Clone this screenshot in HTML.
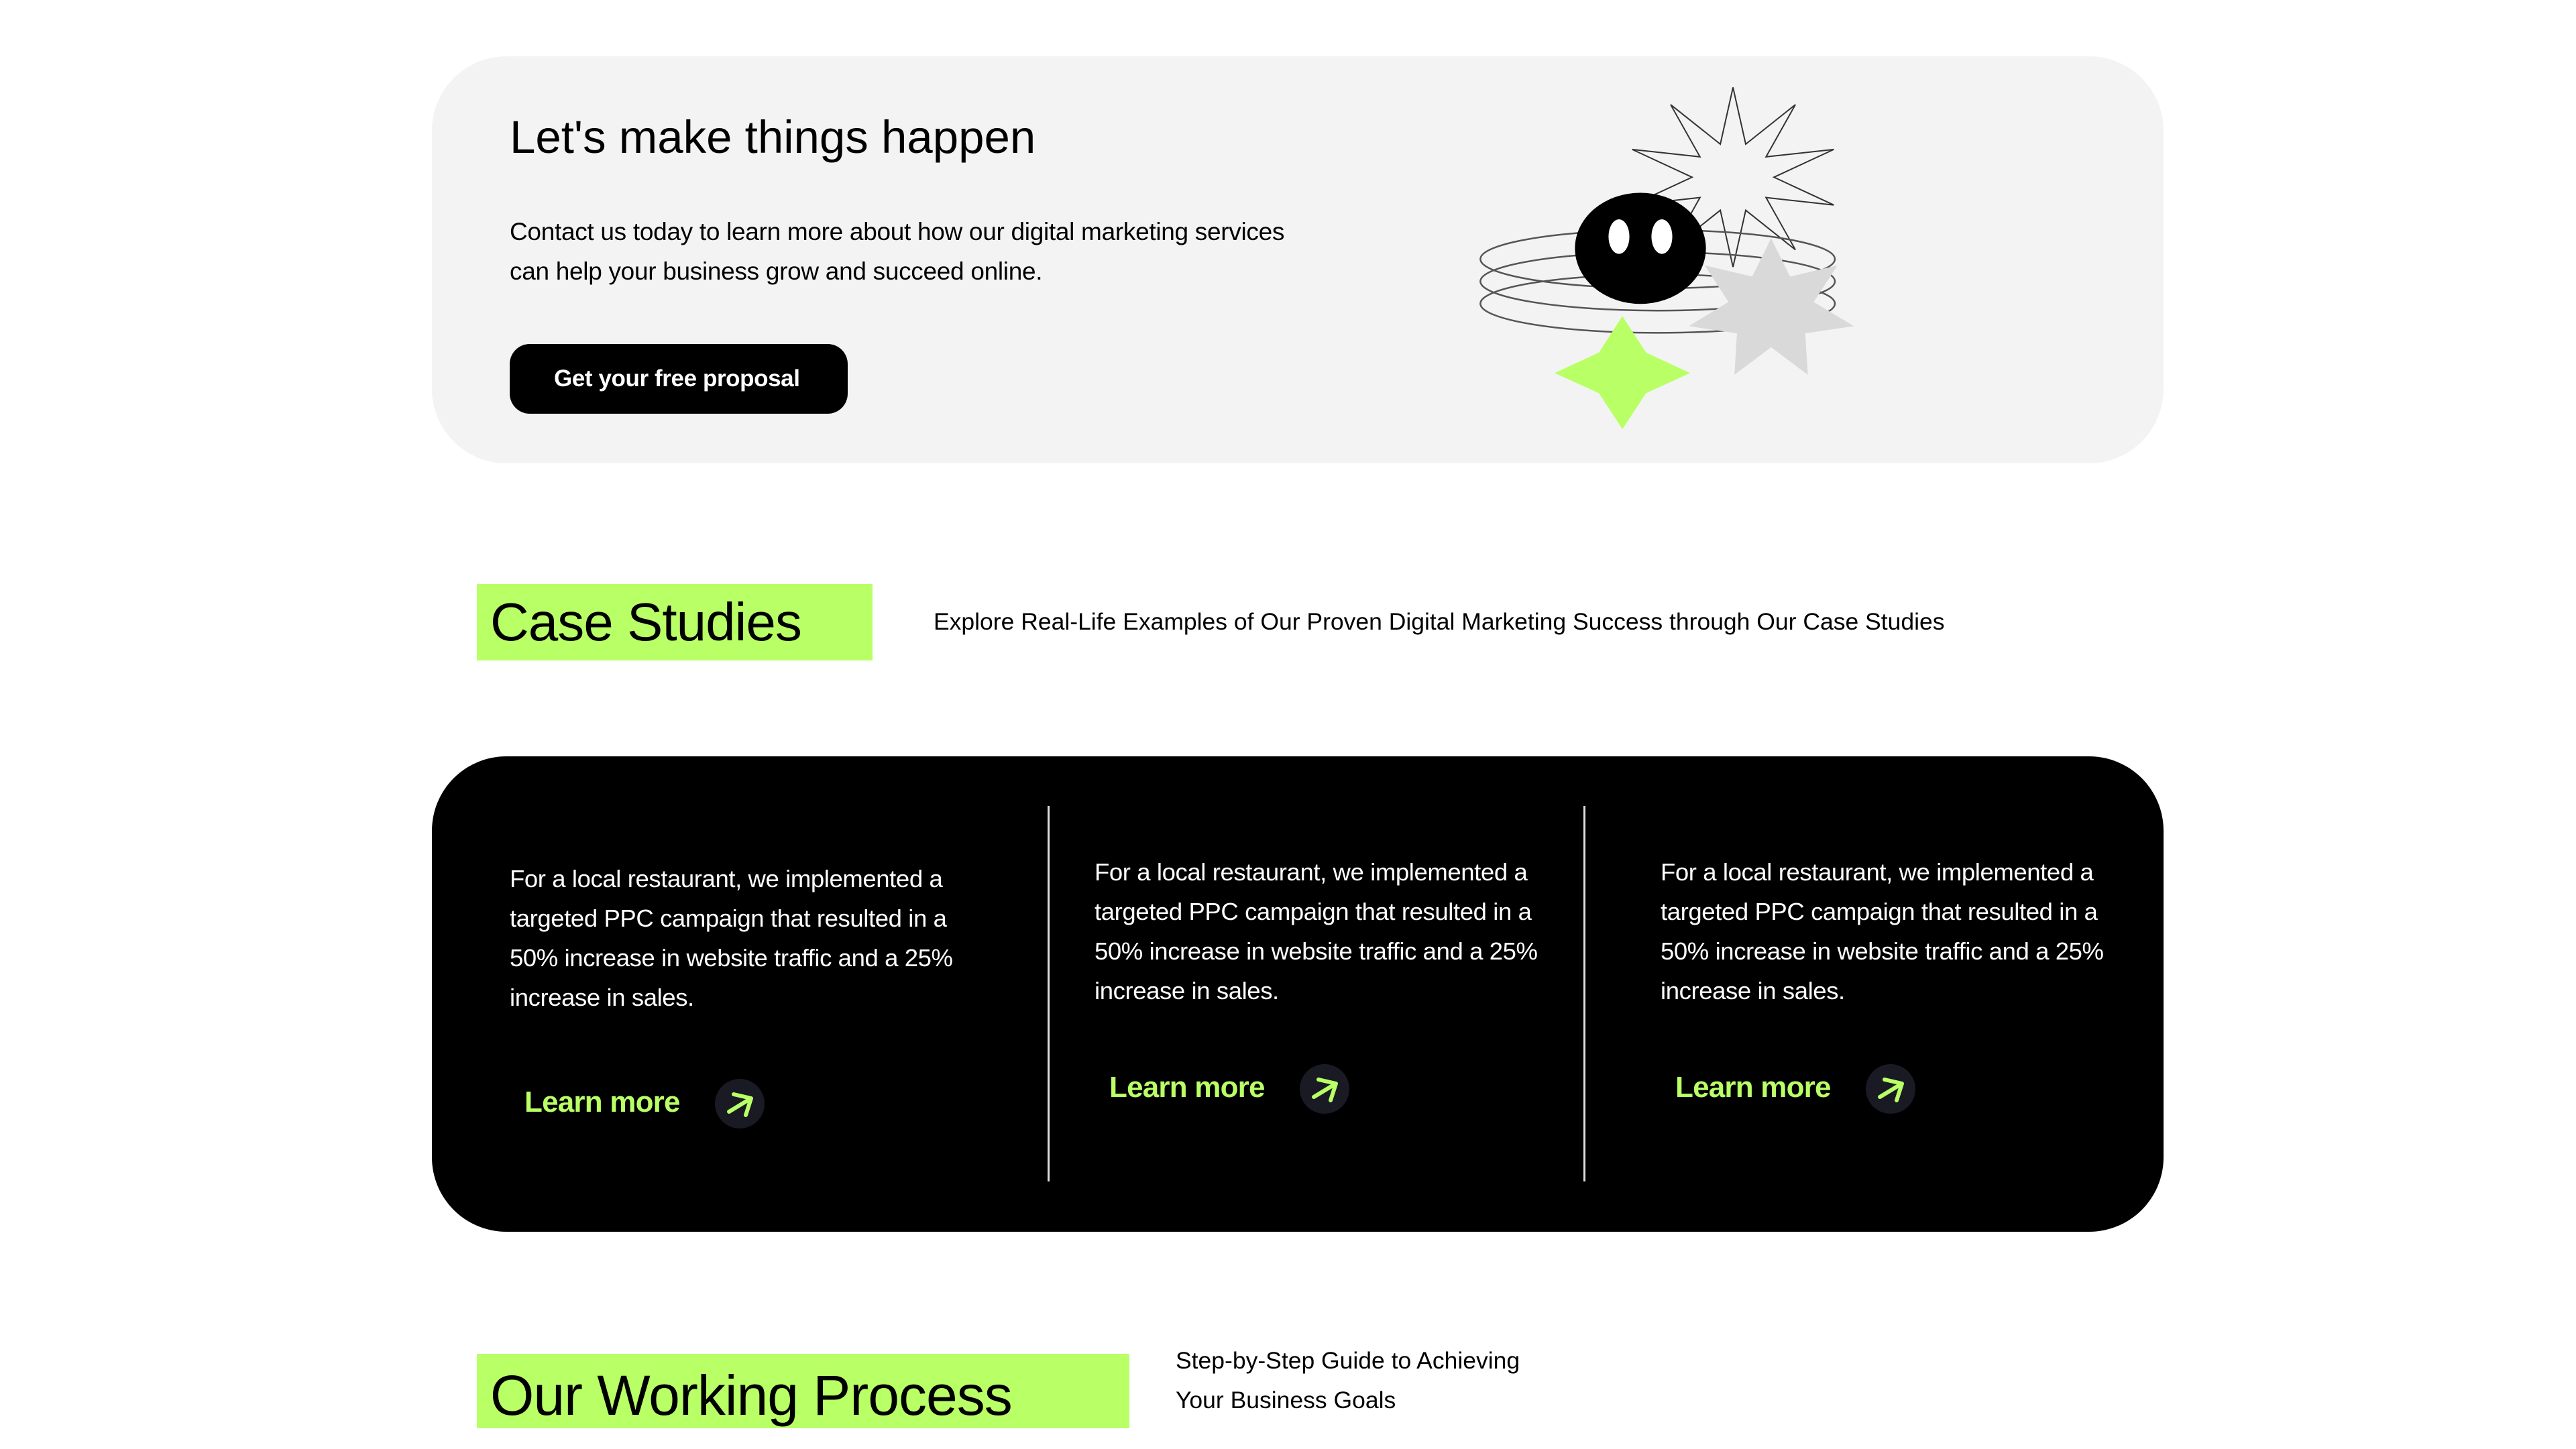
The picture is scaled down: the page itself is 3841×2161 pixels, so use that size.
<!DOCTYPE html>
<html><head><meta charset="utf-8"><style>
*{margin:0;padding:0;box-sizing:border-box}
body{width:3841px;height:2161px;background:#fff;position:relative;overflow:hidden;font-family:"Liberation Sans",sans-serif;color:#000}
.a{position:absolute;white-space:nowrap}
.top{left:644px;top:84px;width:2582px;height:607px;background:#f3f3f3;border-radius:111px}
.h1{left:760px;top:165px;font-size:69px;line-height:80px}
.p{left:760px;top:316px;font-size:37px;line-height:59px;letter-spacing:-0.3px}
.btn{left:760px;top:513px;width:504px;height:104px;background:#000;border-radius:30px;color:#fff;font-size:35px;font-weight:bold;line-height:104px;padding-left:66px;letter-spacing:-0.4px}
.tag{background:#b9ff66;font-size:80px;line-height:114px;padding-left:20px;letter-spacing:-1px}
.desc{font-size:35.5px;line-height:59px}
.card{left:644px;top:1128px;width:2582px;height:709px;background:#000;border-radius:111px}
.div{width:3px;background:#ddd;top:1202px;height:560px}
.ct{color:#fff;font-size:36.5px;line-height:59px;letter-spacing:-0.4px}
.lm{color:#b9ff66;font-size:44px;font-weight:bold;line-height:60px;letter-spacing:-0.8px}
</style></head><body>
<div class="a top"></div>
<div class="a h1">Let's make things happen</div>
<div class="a p">Contact us today to learn more about how our digital marketing services<br>can help your business grow and succeed online.</div>
<div class="a btn">Get your free proposal</div>
<svg class="a" style="left:0;top:0" width="3841" height="2161">
<g transform="translate(2180,100) scale(0.42088,0.35714)">
<polygon points="960,85 1005,322 1181,157 1077,375 1317,344 1105,460 1317,576 1077,545 1181,763 1005,598 960,835 915,598 739,763 843,545 603,576 815,460 603,344 843,375 739,157 915,322" fill="none" stroke="#333" stroke-width="2" vector-effect="non-scaling-stroke"/>
<g fill="none" stroke="#555" stroke-width="2.5" vector-effect="non-scaling-stroke">
<ellipse cx="693" cy="802" rx="628" ry="122" vector-effect="non-scaling-stroke"/>
<ellipse cx="693" cy="895" rx="628" ry="122" vector-effect="non-scaling-stroke"/>
<ellipse cx="693" cy="988" rx="628" ry="122" vector-effect="non-scaling-stroke"/>
</g>
<circle cx="632" cy="757" r="232" fill="#000"/>
<ellipse cx="556" cy="708" rx="37" ry="72" fill="#fff"/>
<ellipse cx="708" cy="708" rx="37" ry="72" fill="#fff"/>
<polygon points="1095,715 1162,875 1330,828 1246,981 1388,1082 1216,1112 1225,1285 1095,1170 965,1285 974,1112 803,1082 944,981 860,828 1028,875" fill="#d9d9d9"/>
<polygon points="568,1040 652,1192 808,1278 652,1362 568,1512 485,1362 328,1278 485,1192" fill="#b9ff66"/>
</g>
</svg>
<div class="a tag" style="left:711px;top:871px;width:590px;height:114px">Case Studies</div>
<div class="a desc" style="left:1392px;top:898px">Explore Real-Life Examples of Our Proven Digital Marketing Success through Our Case Studies</div>
<div class="a card"></div>
<div class="a div" style="left:1562px"></div>
<div class="a div" style="left:2361px"></div>
<div class="a ct" style="left:760px;top:1281px">For a local restaurant, we implemented a<br>targeted PPC campaign that resulted in a<br>50% increase in website traffic and a 25%<br>increase in sales.</div>
<div class="a ct" style="left:1632px;top:1271px">For a local restaurant, we implemented a<br>targeted PPC campaign that resulted in a<br>50% increase in website traffic and a 25%<br>increase in sales.</div>
<div class="a ct" style="left:2476px;top:1271px">For a local restaurant, we implemented a<br>targeted PPC campaign that resulted in a<br>50% increase in website traffic and a 25%<br>increase in sales.</div>
<div class="a lm" style="left:782px;top:1614px">Learn more</div>
<div class="a lm" style="left:1654px;top:1592px">Learn more</div>
<div class="a lm" style="left:2498px;top:1592px">Learn more</div>
<svg class="a" style="left:0;top:0" width="3841" height="2161">
<defs><g id="ar"><circle r="37" fill="#191a23"/><path d="M-16 12 L17 -8 M-9 -14 L17 -8 L9 17" fill="none" stroke="#b9ff66" stroke-width="6" stroke-linecap="round" stroke-linejoin="round"/></g></defs>
<use href="#ar" x="1103" y="1646"/>
<use href="#ar" x="1975" y="1624"/>
<use href="#ar" x="2819" y="1624"/>
</svg>
<div class="a tag" style="left:711px;top:2019px;width:973px;height:111px;line-height:124px;font-size:84px">Our Working Process</div>
<div class="a desc" style="left:1753px;top:2000px">Step-by-Step Guide to Achieving<br>Your Business Goals</div>
</body></html>
